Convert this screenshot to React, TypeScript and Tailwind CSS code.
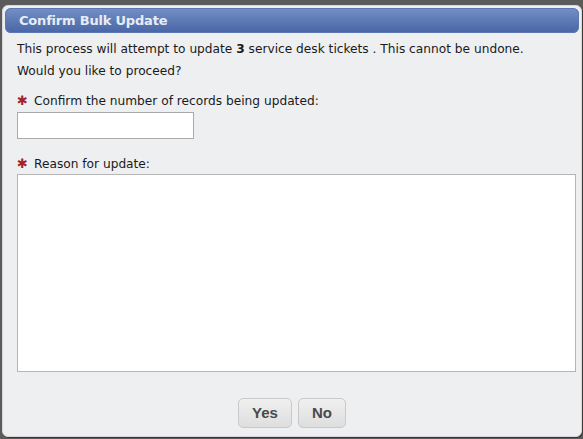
export default function App() {
  return (
    <div className="w-[583px] h-[439px] bg-[#5b5b5b] pt-[5px] pl-[2px] pr-[1px] pb-[2px] font-['DejaVu_Sans',Tahoma,sans-serif]">
      <div className="h-full w-full bg-[#eeeff1] rounded-[6px] border border-[#d6d8dc] flex flex-col px-[2px] pt-[2px] shadow-[1px_1px_0_#3a3a3a]">
        <div className="h-[25px] rounded-[6px] bg-gradient-to-b from-[#7590c4] to-[#4865a6] flex items-center pl-[14px] shadow-[inset_0_0_0_1px_#5b78b3]">
          <span className="text-[13px] font-bold text-[#e6ecf5] tracking-[-0.2px]">Confirm Bulk Update</span>
        </div>
        <div className="flex flex-col px-[12px] text-[12.2px] text-[#1a1a1a]">
          <p className="mt-[5px] leading-[22px]">
            This process will attempt to update <b>3</b> service desk tickets . This cannot be undone.
            <br />
            Would you like to proceed?
          </p>
          <label className="mt-[11px] flex items-center leading-[16px]">
            <span className="text-[#a3212a] text-[13px] w-[17px]">✱</span>
            <span>Confirm the number of records being updated:</span>
          </label>
          <input className="mt-[3px] w-[177px] h-[27px] bg-white border border-[#aaaaaa] outline-none" />
          <label className="mt-[17px] flex items-center leading-[16px]">
            <span className="text-[#a3212a] text-[13px] w-[17px]">✱</span>
            <span>Reason for update:</span>
          </label>
          <textarea className="mt-[2px] w-[559px] h-[198px] bg-white border border-[#b5b5b5] outline-none resize-none" />
          <div className="mt-[26px] flex justify-center gap-[6px]">
            <button className="w-[54px] h-[30px] rounded-[5px] border border-[#c9c9c9] bg-gradient-to-b from-[#f0f0f0] to-[#dedede] text-[15px] font-bold text-[#4a4a4a] font-['Liberation_Sans',Arial,sans-serif]">
              Yes
            </button>
            <button className="w-[48px] h-[30px] rounded-[5px] border border-[#c9c9c9] bg-gradient-to-b from-[#f0f0f0] to-[#dedede] text-[15px] font-bold text-[#4a4a4a] font-['Liberation_Sans',Arial,sans-serif]">
              No
            </button>
          </div>
        </div>
      </div>
    </div>
  );
}
